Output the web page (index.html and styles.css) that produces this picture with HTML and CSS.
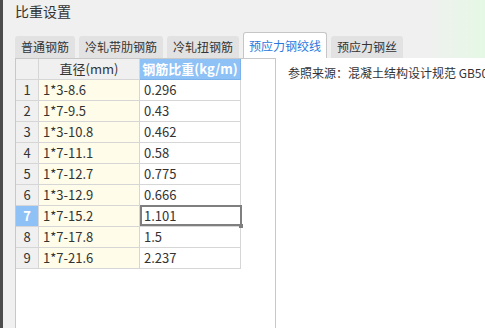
FILE: index.html
```html
<!DOCTYPE html>
<html lang="zh">
<head>
    <meta charset="UTF-8">
    <title>比重设置</title>
    <link rel="stylesheet" href="styles.css">
</head>
<body>
    <div class="frame">
        <div class="edge"></div>
        <div class="main">
            <div class="title">比重设置</div>

            <div class="tabs">
                <div class="tab">普通钢筋</div>
                <div class="tab">冷轧带肋钢筋</div>
                <div class="tab">冷轧扭钢筋</div>
                <div class="tab active">预应力钢绞线</div>
                <div class="tab">预应力钢丝</div>
            </div>

            <div class="panel">
                <div class="grid-box">
                    <div class="grid">
                        <div class="cell head num"></div>
                        <div class="cell head">直径(mm)</div>
                        <div class="cell head sel">钢筋比重(kg/m)</div>

                        <div class="cell num">1</div><div class="cell dia">1*3-8.6</div><div class="cell val">0.296</div>
                        <div class="cell num">2</div><div class="cell dia">1*7-9.5</div><div class="cell val">0.43</div>
                        <div class="cell num">3</div><div class="cell dia">1*3-10.8</div><div class="cell val">0.462</div>
                        <div class="cell num">4</div><div class="cell dia">1*7-11.1</div><div class="cell val">0.58</div>
                        <div class="cell num">5</div><div class="cell dia">1*7-12.7</div><div class="cell val">0.775</div>
                        <div class="cell num">6</div><div class="cell dia">1*3-12.9</div><div class="cell val">0.666</div>
                        <div class="cell num sel">7</div><div class="cell dia">1*7-15.2</div><div class="cell val current">1.101</div>
                        <div class="cell num">8</div><div class="cell dia">1*7-17.8</div><div class="cell val">1.5</div>
                        <div class="cell num">9</div><div class="cell dia">1*7-21.6</div><div class="cell val">2.237</div>
                    </div>
                </div>
                <div class="note">参照来源：混凝土结构设计规范 GB50010-2010</div>
            </div>
        </div>
    </div>
</body>
</html>
```

FILE: styles.css
```css
body {
    margin: 0;
    width: 485px;
    height: 328px;
    overflow: hidden;
    font-family: 'Noto Sans CJK SC', 'Noto Sans', sans-serif;
    color: #333;
    background: linear-gradient(90deg, #f0f0f0 0, #f0f0f0 425px, #e5f8e5 485px);
}

.frame {
    display: flex;
    height: 328px;
}

.edge {
    width: 3px;
    background: #4c4c4c;
}

.main {
    flex: 1;
    display: flex;
    flex-direction: column;
    padding-left: 12px;
    min-width: 0;
}

.title {
    height: 32px;
    padding-top: 1px;
    box-sizing: border-box;
    font-size: 14px;
    line-height: 20px;
}

.tabs {
    display: flex;
    align-items: flex-end;
    gap: 4px;
    height: 26px;
}

.tab {
    height: 22px;
    line-height: 21px;
    padding: 0 6px;
    font-size: 12px;
    background: #e2e2e2;
    border-radius: 3px 3px 0 0;
    white-space: nowrap;
}

.tab.active {
    height: 26px;
    line-height: 25px;
    padding: 0 5px;
    box-sizing: border-box;
    background: #fff;
    border: 1px solid #c6c6c6;
    border-bottom: none;
    color: #2b78dc;
}

.panel {
    flex: 1;
    display: flex;
    background: #fff;
    min-width: 0;
    overflow: hidden;
}

.grid-box {
    width: 259px;
    border: 1px solid #c8c8c8;
    border-bottom: none;
    flex-shrink: 0;
}

.grid {
    display: grid;
    grid-template-columns: 23px 101px 101px;
    grid-auto-rows: 21px;
}

.cell {
    box-sizing: border-box;
    border-right: 1px solid #d6d6d6;
    border-bottom: 1px solid #d6d6d6;
    font-size: 13px;
    line-height: 20px;
    padding-left: 4px;
    white-space: nowrap;
}

.cell.head {
    background: #f0f0f0;
    text-align: center;
    padding-left: 0;
}

.cell.head.sel {
    background: #8ec2f6;
    border-color: #7cb2ea;
    color: #fff;
    font-weight: bold;
}

.cell.num {
    background: #f0f0f0;
    text-align: center;
    padding-left: 0;
}

.cell.num.sel {
    background: #8ec2f6;
    color: #fff;
    font-weight: bold;
}

.cell.dia {
    background: #fffde9;
}

.cell.val {
    background: #fff;
}

.current {
    position: relative;
}

.current::after {
    content: '';
    position: absolute;
    top: -1px;
    left: 0;
    right: -2px;
    bottom: 0;
    border: 2px solid #7f7f7f;
}

.current::before {
    content: '';
    position: absolute;
    right: -3px;
    bottom: -2px;
    width: 4px;
    height: 4px;
    background: #7f7f7f;
    z-index: 1;
}

.note {
    flex: 1;
    min-width: 0;
    overflow: hidden;
    padding: 6px 0 0 12px;
    font-size: 12px;
    line-height: 18px;
    white-space: nowrap;
}
```
